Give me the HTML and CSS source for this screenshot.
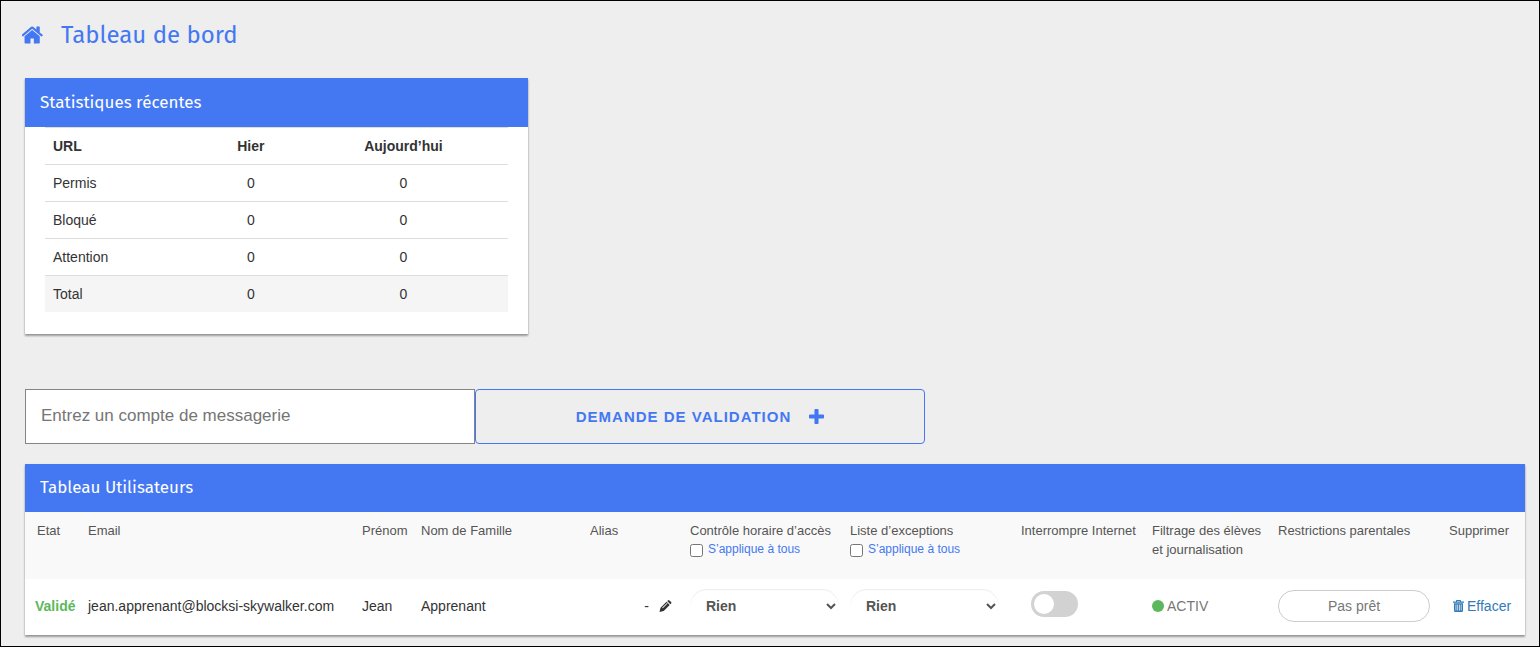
FILE: index.html
```html
<!DOCTYPE html>
<html lang="fr">
<head>
<meta charset="utf-8">
<meta name="viewport" content="width=device-width, initial-scale=1">
<title>Tableau de bord</title>
<link rel="stylesheet" href="styles.css">
</head>
<body>
<main class="page">
  <header class="page-head">
    <svg class="icon-home" viewBox="64 253 1664 1283" aria-hidden="true"><path d="M1408 992v480q0 26-19 45t-45 19h-384v-384h-256v384h-384q-26 0-45-19t-19-45v-480q0-1 .5-3t.5-3l575-474 575 474q1 2 1 6zm223-69l-62 74q-8 9-21 11h-3q-13 0-21-7l-692-577-692 577q-12 8-24 7-13-2-21-11l-62-74q-8-10-7-23.5t11-21.5l719-599q32-26 76-26t76 26l244 204v-195q0-14 9-23t23-9h192q14 0 23 9t9 23v408l219 182q10 8 11 21.5t-7 23.5z"/></svg>
    <h1 class="page-title">Tableau de bord</h1>
  </header>

  <section class="card stats">
    <h2 class="card-title">Statistiques récentes</h2>
    <div class="stats-body">
      <table class="stats-table">
        <thead>
          <tr><th class="label-col">URL</th><th class="yesterday-col">Hier</th><th>Aujourd’hui</th></tr>
        </thead>
        <tbody>
          <tr><td>Permis</td><td>0</td><td>0</td></tr>
          <tr><td>Bloqué</td><td>0</td><td>0</td></tr>
          <tr><td>Attention</td><td>0</td><td>0</td></tr>
          <tr class="total"><td>Total</td><td>0</td><td>0</td></tr>
        </tbody>
      </table>
    </div>
  </section>

  <form class="invite">
    <input class="invite-input" type="email" placeholder="Entrez un compte de messagerie" aria-label="Entrez un compte de messagerie">
    <button class="invite-button" type="button">DEMANDE DE VALIDATION
      <svg class="icon-plus" viewBox="192 128 1408 1408" aria-hidden="true"><path d="M1600 736v192q0 40-28 68t-68 28h-416v416q0 40-28 68t-68 28h-192q-40 0-68-28t-28-68v-416h-416q-40 0-68-28t-28-68v-192q0-40 28-68t68-28h416v-416q0-40 28-68t68-28h192q40 0 68 28t28 68v416h416q40 0 68 28t28 68z"/></svg>
    </button>
  </form>

  <section class="card users">
    <h2 class="card-title">Tableau Utilisateurs</h2>
    <table class="users-table">
      <colgroup>
        <col class="c-state"><col><col class="c-first"><col class="c-last"><col class="c-alias"><col class="c-time"><col class="c-list"><col class="c-pause"><col class="c-filter"><col class="c-parental"><col class="c-delete">
      </colgroup>
      <thead>
        <tr>
          <th>Etat</th>
          <th>Email</th>
          <th>Prénom</th>
          <th>Nom de Famille</th>
          <th>Alias</th>
          <th>Contrôle horaire d’accès
            <label class="apply-all"><input type="checkbox">S’applique à tous</label></th>
          <th>Liste d’exceptions
            <label class="apply-all"><input type="checkbox">S’applique à tous</label></th>
          <th>Interrompre Internet</th>
          <th>Filtrage des élèves<br>et journalisation</th>
          <th>Restrictions parentales</th>
          <th>Supprimer</th>
        </tr>
      </thead>
      <tbody>
        <tr>
          <td class="state">Validé</td>
          <td>jean.apprenant@blocksi-skywalker.com</td>
          <td>Jean</td>
          <td>Apprenant</td>
          <td><div class="alias">-
            <button class="edit" type="button" aria-label="Modifier l’alias"><svg class="icon-pencil" viewBox="0 0 12 12" aria-hidden="true"><path fill-rule="evenodd" d="M0 12l1-4.200L7 1.800 10.200 5 4.200 11zM7.700 1.100L8.500.4Q9.200-.2 9.900.4l1.700 1.700q.7.700 0 1.400l-.8.8zM2.600 7.700l.7.500L8 3.500 7.500 2.900z"/></svg></button></div></td>
          <td><select class="picker" aria-label="Contrôle horaire d’accès"><option>Rien</option></select></td>
          <td><select class="picker" aria-label="Liste d’exceptions"><option>Rien</option></select></td>
          <td><input class="switch" type="checkbox" role="switch" aria-label="Interrompre Internet"></td>
          <td><span class="activity"><span class="dot"></span>ACTIV</span></td>
          <td><button class="pill" type="button">Pas prêt</button></td>
          <td><a class="delete" href="#"><svg class="icon-trash" viewBox="0 0 11 12" aria-hidden="true"><path fill-rule="evenodd" d="M3 1.500V.8Q3 0 3.800 0h3.400Q8 0 8 .8v.7h3v1.300H0V1.500zM4 1v.5h3V1zM1 3.300h9v7.500Q10 12 8.800 12H2.200Q1 12 1 10.800zM2.600 4.500v6h.7v-6zM4.400 4.500v6h.7v-6zM6 4.500v6h.7v-6zM7.800 4.500v6h.7v-6z"/></svg>Effacer</a></td>
        </tr>
      </tbody>
    </table>
  </section>
</main>
</body>
</html>
```

FILE: styles.css
```css
* {
  box-sizing: border-box;
}

body {
  margin: 0;
  min-height: 100vh;
  border: 1px solid #000;
  background: #eee;
  color: #333;
  font: 14px/20px "Liberation Sans", Arial, sans-serif;
}

.page {
  padding: 16px 14px 10px 24px;
}

/* Page heading */
.page-head {
  display: flex;
  align-items: center;
  gap: 17px;
  margin: 0 0 25px -3px;
}

.icon-home {
  width: 22px;
  height: 18px;
  fill: #4478f2;
}

.page-title {
  margin: 0;
  color: #4478f2;
  font: 400 24px/36px "Fira Sans", "Noto Sans", sans-serif;
}

/* Cards */
.card {
  background: #fff;
  box-shadow: 0 2px 2px rgba(0, 0, 0, 0.3), 0 1px 2px rgba(0, 0, 0, 0.15);
}

.card-title {
  margin: 0;
  padding: 12px 15px;
  background: #4478f2;
  color: #fff;
  font: 400 17px/24px "Fira Sans", "Noto Sans", sans-serif;
}

/* Recent statistics */
.stats {
  width: 33.5%;
  min-width: 320px;
}

.stats .card-title {
  line-height: 25px;
}

.stats-body {
  padding: 0 20px 22px;
}

.stats-table {
  width: 100%;
  border-collapse: collapse;
  table-layout: fixed;
}

.stats-table th,
.stats-table td {
  padding: 8px;
  border-top: 1px solid #ddd;
  text-align: center;
}

.stats-table th:first-child,
.stats-table td:first-child {
  text-align: left;
}

.label-col {
  width: 34%;
}

.yesterday-col {
  width: 21%;
}

.total {
  background: #f5f5f5;
}

/* Validation request */
.invite {
  display: grid;
  grid-template-columns: 1fr 1fr;
  width: 60%;
  margin: 55px 0 20px;
}

.invite-input,
.invite-button {
  min-width: 0;
  height: 55px;
}

.invite-input {
  padding: 0 15px 2px;
  border: 1px solid #858585;
  border-radius: 0;
  background: #fff;
  font: 17px "Liberation Sans", Arial, sans-serif;
}

.invite-input::placeholder {
  color: #757575;
}

.invite-button {
  display: flex;
  align-items: center;
  justify-content: center;
  gap: 18px;
  border: 1px solid #4478f2;
  border-radius: 4px;
  background: transparent;
  color: #4478f2;
  font: bold 15px "Liberation Sans", Arial, sans-serif;
  letter-spacing: 1px;
}

.icon-plus {
  width: 15px;
  height: 15px;
  fill: currentColor;
}

/* Users */
.users-table {
  width: 100%;
  min-width: 1480px;
  border-collapse: collapse;
  table-layout: fixed;
}

.c-state { width: 63px; }
.c-first { width: 59px; }
.c-last { width: 169px; }
.c-alias { width: 100px; }
.c-time { width: 160px; }
.c-list { width: 171px; }
.c-pause { width: 131px; }
.c-filter { width: 126px; }
.c-parental { width: 171px; }
.c-delete { width: 76px; }

.users-table th {
  height: 67px;
  padding: 9px 0 0;
  background: #f9f9f9;
  color: #555;
  font-size: 13px;
  font-weight: 400;
  line-height: 19px;
  text-align: left;
  vertical-align: top;
  white-space: nowrap;
}

.users-table td {
  height: 56px;
  padding: 0 0 2px;
  white-space: nowrap;
}

.users-table th:first-child {
  padding-left: 12px;
}

.users-table .state {
  padding-left: 10px;
  color: #5cb85c;
  font-weight: 700;
}

.apply-all {
  display: flex;
  align-items: center;
  gap: 5px;
  color: #4478f2;
  font-size: 12px;
  line-height: 18px;
}

.apply-all input {
  width: 13px;
  height: 13px;
  margin: 3px 0 0;
}

.alias {
  display: flex;
  align-items: center;
  justify-content: flex-end;
  gap: 10px;
  padding-right: 18px;
}

.edit {
  display: flex;
  padding: 0;
  border: 0;
  background: none;
  color: #333;
}

.icon-pencil {
  width: 13px;
  height: 12px;
  fill: currentColor;
}

.picker {
  display: block;
  width: 149px;
  height: 34px;
  padding: 6px 0 6px 12px;
  border: 0;
  border-radius: 17px;
  background: #fff;
  box-shadow: inset 0 1px 1px rgba(0, 0, 0, 0.08);
  color: #555;
  font: bold 14px "Liberation Sans", Arial, sans-serif;
}

.switch {
  display: block;
  appearance: none;
  width: 47px;
  height: 26px;
  margin: 0 0 4px 10px;
  padding: 3px;
  border-radius: 13px;
  background: #d2d2d2;
}

.switch::before {
  content: "";
  display: block;
  width: 20px;
  height: 20px;
  border-radius: 50%;
  background: #fff;
}

.switch:checked {
  background: #4478f2;
}

.switch:checked::before {
  margin-left: auto;
}

.activity {
  display: flex;
  align-items: center;
  gap: 3px;
  color: #777;
}

.dot {
  width: 12px;
  height: 12px;
  border-radius: 50%;
  background: #5cb85c;
}

.pill {
  width: 152px;
  height: 32px;
  border: 1px solid #ccc;
  border-radius: 16px;
  background: #fff;
  color: #777;
  font: 14px "Liberation Sans", Arial, sans-serif;
}

.delete {
  display: flex;
  align-items: center;
  gap: 3px;
  padding-left: 4px;
  color: #337ab7;
  text-decoration: none;
}

.icon-trash {
  width: 11px;
  height: 12px;
  fill: currentColor;
}
```
